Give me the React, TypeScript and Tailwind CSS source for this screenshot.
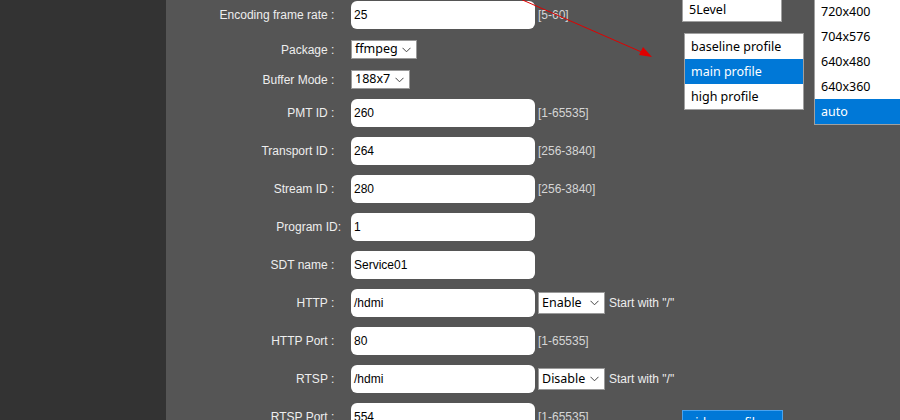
import React from 'react';

const labelFont = { fontFamily: '"Liberation Sans", Arial, sans-serif' };

function Chevron() {
    return (
        <svg width="9" height="6" viewBox="0 0 9 6" className="shrink-0">
            <path d="M0.5 0.8 L4.5 4.8 L8.5 0.8" fill="none" stroke="#444" strokeWidth="1" />
        </svg>
    );
}

function FakeSelect({ value, width, height }: { value: string; width: string; height: string }) {
    return (
        <div
            className={`flex items-center justify-between bg-white border border-[#9a9a9a] pl-[3px] pr-[5px] text-[12.5px] text-black ${width} ${height}`}
            style={{ fontFamily: '"Noto Sans", "Open Sans", sans-serif' }}
        >
            <span className="leading-none">{value}</span>
            <Chevron />
        </div>
    );
}

function TextBox({ value }: { value: string }) {
    return (
        <div className="w-[184px] h-[28px] shrink-0 rounded-[6px] bg-white flex items-center pl-[3px] text-[12px] text-black">
            {value}
        </div>
    );
}

function Row({ label, height = 'h-[38px]', children }: { label: string; height?: string; children: React.ReactNode }) {
    return (
        <div className={`flex items-center ${height}`}>
            <div className="w-[175px] text-right text-[12px] text-[#eeeeee] whitespace-pre">{label}</div>
            <div className="ml-[10px] flex items-center">{children}</div>
        </div>
    );
}

function Hint({ text }: { text: string }) {
    return <span className="ml-[3px] text-[12px] text-[#d6d6d6]">{text}</span>;
}

function Item({ text, active = false }: { text: string; active?: boolean }) {
    return (
        <div className={`h-[25px] flex items-center pl-[6px] pt-[2px] ${active ? 'bg-[#0078d7] text-white' : ''}`}>
            {text}
        </div>
    );
}

const listFont = { fontFamily: '"Noto Sans", "Open Sans", sans-serif' };

export default function App() {
    return (
        <div className="flex w-[900px] h-[420px] overflow-hidden" style={labelFont}>
            <div className="w-[166px] shrink-0 bg-[#333333]" />
            <div className="relative flex-1 bg-[#555555] overflow-hidden">
                <div className="flex flex-col -mt-[4px]">
                    <Row label={'Encoding frame rate :\u00a0\u00a0'}>
                        <TextBox value="25" />
                        <Hint text="[5-60]" />
                    </Row>
                    <Row label={'Package :\u00a0\u00a0'} height="h-[31px]">
                        <FakeSelect value="ffmpeg" width="w-[66px]" height="h-[19px]" />
                    </Row>
                    <Row label={'Buffer Mode :\u00a0\u00a0'} height="h-[29px]">
                        <FakeSelect value="188x7" width="w-[59px]" height="h-[19px]" />
                    </Row>
                    <Row label={'PMT ID :\u00a0\u00a0'}>
                        <TextBox value="260" />
                        <Hint text="[1-65535]" />
                    </Row>
                    <Row label={'Transport ID :\u00a0\u00a0'}>
                        <TextBox value="264" />
                        <Hint text="[256-3840]" />
                    </Row>
                    <Row label={'Stream ID :\u00a0\u00a0'}>
                        <TextBox value="280" />
                        <Hint text="[256-3840]" />
                    </Row>
                    <Row label="Program ID:">
                        <TextBox value="1" />
                    </Row>
                    <Row label={'SDT name :\u00a0\u00a0'}>
                        <TextBox value="Service01" />
                    </Row>
                    <Row label={'HTTP :\u00a0\u00a0'}>
                        <TextBox value="/hdmi" />
                        <div className="ml-[3px]">
                            <FakeSelect value="Enable" width="w-[67px]" height="h-[22px]" />
                        </div>
                        <span className="ml-[4px] text-[12px] text-[#eeeeee]">Start with "/"</span>
                    </Row>
                    <Row label={'HTTP Port :\u00a0\u00a0'}>
                        <TextBox value="80" />
                        <Hint text="[1-65535]" />
                    </Row>
                    <Row label={'RTSP :\u00a0\u00a0'}>
                        <TextBox value="/hdmi" />
                        <div className="ml-[3px]">
                            <FakeSelect value="Disable" width="w-[67px]" height="h-[22px]" />
                        </div>
                        <span className="ml-[4px] text-[12px] text-[#eeeeee]">Start with "/"</span>
                    </Row>
                    <Row label={'RTSP Port :\u00a0\u00a0'}>
                        <TextBox value="554" />
                        <Hint text="[1-65535]" />
                    </Row>
                </div>

                {/* red arrow annotation */}
                <svg className="absolute left-0 top-0 pointer-events-none" width="734" height="420">
                    <line x1="352" y1="-2" x2="480" y2="54" stroke="#e00000" strokeWidth="1" />
                    <polygon points="486,57 473,55 477,47" fill="#e00000" />
                </svg>

                {/* level list (scrolled, last item visible) */}
                <div className="absolute left-[516px] top-[-5px] w-[100px] h-[27px] bg-white border border-[#a0a0a0] text-[12.5px] text-black flex items-center pl-[6px] pt-[3px]" style={listFont}>
                    5Level
                </div>

                {/* profile list */}
                <div className="absolute left-[518px] top-[33px] w-[120px] bg-white border border-[#a0a0a0] text-[12.5px] text-black" style={listFont}>
                    <Item text="baseline profile" />
                    <Item text="main profile" active />
                    <Item text="high profile" />
                </div>

                {/* resolution list */}
                <div className="absolute left-[648px] top-[-2px] w-[100px] bg-white border border-[#a0a0a0] text-[12.5px] text-black" style={listFont}>
                    <Item text="720x400" />
                    <Item text="704x576" />
                    <Item text="640x480" />
                    <Item text="640x360" />
                    <Item text="auto" active />
                </div>

                {/* bottom list, mostly cut off */}
                <div className="absolute left-[516px] top-[410px] w-[101px] h-[25px] bg-[#0078d7] border border-[#4aa3ee] text-[12.5px] text-white pl-[6px] pt-[3px]" style={listFont}>
                    video profile
                </div>
            </div>
        </div>
    );
}
